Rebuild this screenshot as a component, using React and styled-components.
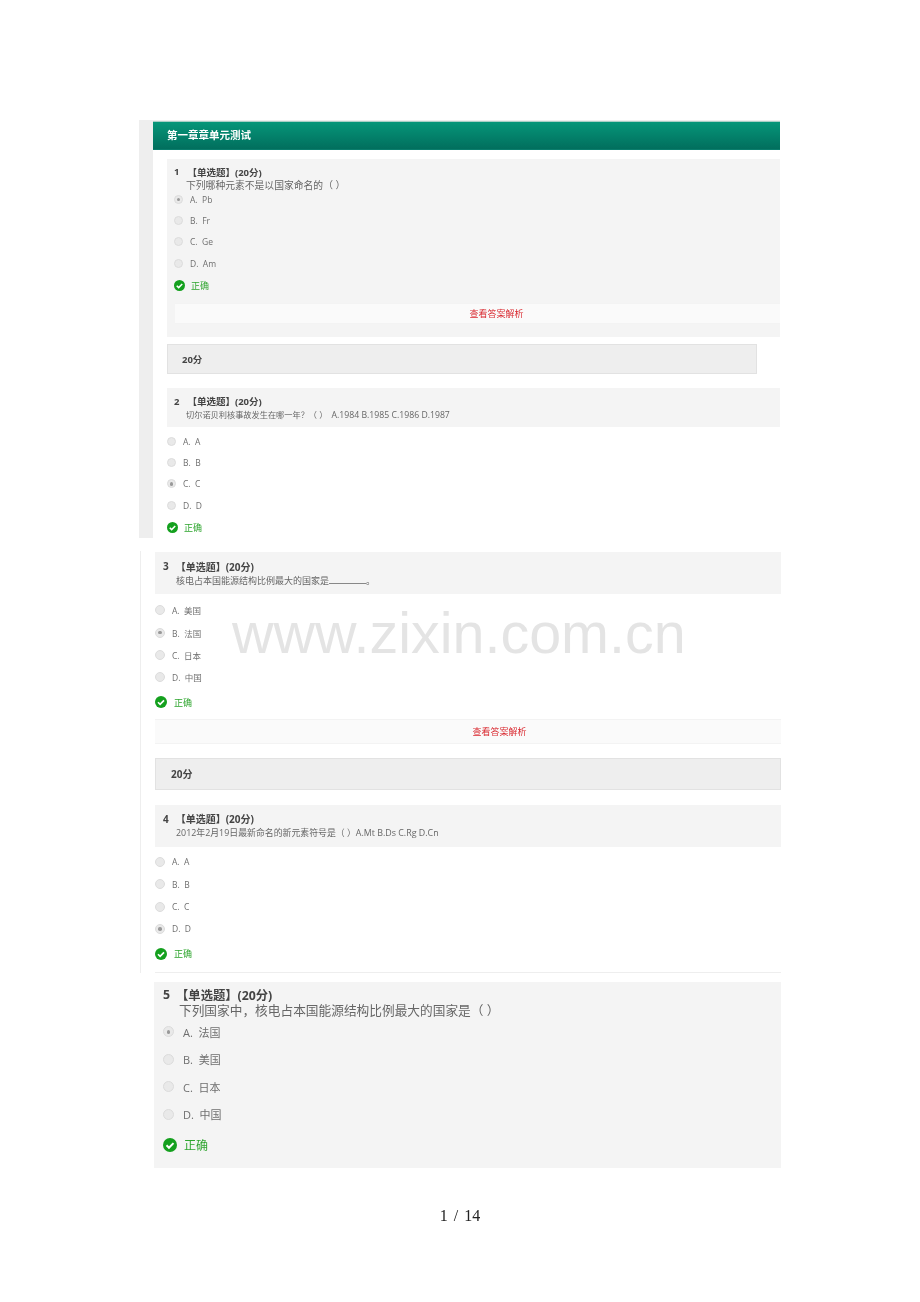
import React from "react";
import styled, { createGlobalStyle } from "styled-components";

const GlobalStyle = createGlobalStyle`
  html, body {
    margin: 0;
    padding: 0;
    background: #fff;
  }
`;

const FONT = `"Open Sans", "Noto Sans CJK SC", sans-serif`;

const Page = styled.div`
  position: relative;
  width: 920px;
  height: 1302px;
  padding-top: 120px;
  box-sizing: border-box;
  overflow: hidden;
  font-family: ${FONT};
  color: #555;
`;

const Sheet = styled.div`
  filter: blur(0.3px);
`;

const ChapterShot = styled.section`
  display: flex;
  width: 641px;
  height: 418px;
  margin-left: 139px;
  border-top: 1px solid #eee;
  box-sizing: border-box;
`;

const Gutter = styled.div`
  flex: none;
  width: 14px;
  background: #eee;
`;

const ChapterBody = styled.div`
  flex: 1;
  min-width: 0;
`;

const ChapterHeader = styled.header`
  display: flex;
  align-items: center;
  height: 29px;
  padding: 0 0 2px 14px;
  box-sizing: border-box;
  border-top: 1px solid #a9cfc6;
  border-bottom: 1px solid #0a7d6c;
  background: linear-gradient(#069679, #016e5d);
  color: #fff;
  font-size: 10.5px;
  font-weight: 700;
`;

const FirstPanel = styled.div`
  height: 178px;
  margin: 9px 0 0 14px;
  padding: 5px 0 0 7px;
  box-sizing: border-box;
  background: #f4f4f4;
`;

const ScoreBar = styled.div`
  display: flex;
  align-items: center;
  height: ${(p) => p.$h}px;
  margin: ${(p) => p.$margin};
  padding-left: ${(p) => p.$pad}px;
  box-sizing: border-box;
  background: #eee;
  border: 1px solid #e2e2e2;
  color: #444;
  font-size: ${(p) => p.$size}px;
  font-weight: 700;
`;

const QuestionHead = styled.div`
  display: flex;
  flex-direction: column;
  justify-content: center;
  height: ${(p) => p.$h}px;
  margin: ${(p) => p.$margin};
  padding-left: ${(p) => p.$pad}px;
  box-sizing: border-box;
  background: #f4f4f4;
`;

const Title = styled.div`
  display: flex;
  gap: ${(p) => p.$gap}px;
  height: ${(p) => p.$line}px;
  align-items: center;
  font-size: ${(p) => p.$size}px;
  font-weight: 700;
  color: #444;
  white-space: nowrap;
`;

const Stem = styled.div`
  height: ${(p) => p.$line}px;
  line-height: ${(p) => p.$line}px;
  padding-left: ${(p) => p.$indent}px;
  font-size: ${(p) => p.$size}px;
  color: #666;
  white-space: pre;
`;

const LatinPart = styled.span`
  font-size: 1.06em;
`;

const Blank = styled.span`
  display: inline-block;
  width: 37px;
  height: 6px;
  border-bottom: 1px solid #888;
`;

const OptionList = styled.div`
  margin: ${(p) => p.$margin};
`;

const OptionRow = styled.div`
  display: flex;
  align-items: center;
  height: ${(p) => p.$h}px;
  gap: ${(p) => p.$gap}px;
  font-size: ${(p) => p.$size}px;
  color: #6f6f6f;
  white-space: pre;
`;

const Radio = styled.span`
  position: relative;
  flex: none;
  width: ${(p) => p.$d}px;
  height: ${(p) => p.$d}px;
  border-radius: 50%;
  background: #e9e9e9;
  border: 1px solid #dcdcdc;
  box-sizing: border-box;
  &::after {
    content: "";
    display: ${(p) => (p.$checked ? "block" : "none")};
    position: absolute;
    inset: 28%;
    border-radius: 50%;
    background: #999;
  }
`;

const Verdict = styled.div`
  display: flex;
  align-items: center;
  height: ${(p) => p.$h}px;
  gap: ${(p) => p.$gap}px;
  font-size: ${(p) => p.$size}px;
  color: #2ea52e;
`;

const VerdictIndent = styled.div`
  margin-left: 14px;
`;

const AnswerBar = styled.div`
  display: flex;
  align-items: center;
  justify-content: center;
  height: ${(p) => p.$h}px;
  margin: ${(p) => p.$margin};
  background: #fafafa;
  color: #d9272e;
  font-size: 9px;
  border-top: 1px solid #f3f3f3;
  border-bottom: 1px solid #f3f3f3;
  box-sizing: border-box;
`;

const AnswerText = styled.span`
  margin-left: ${(p) => p.$shift}px;
`;

const SecondShot = styled.section`
  width: 641px;
  height: 422px;
  margin: 13px 0 0 140px;
  padding: 1px 0 0 14px;
  box-sizing: border-box;
  border-left: 1px solid #eee;
`;

const BottomRule = styled.div`
  height: 1px;
  margin-top: 5px;
  background: #eee;
`;

const LastPanel = styled.section`
  width: 627px;
  height: 186px;
  margin: 9px 0 0 154px;
  padding: 5px 0 0 9px;
  box-sizing: border-box;
  background: #f4f4f4;
`;

const PageNumber = styled.footer`
  margin-top: 38px;
  text-align: center;
  font-family: "Liberation Serif", serif;
  font-size: 16px;
  line-height: 19px;
  word-spacing: 2px;
  color: #222;
`;

const Watermark = styled.div`
  position: absolute;
  left: 232px;
  top: 598px;
  font-family: "Liberation Sans", sans-serif;
  font-size: 57.5px;
  line-height: 70px;
  color: #c4c4c4;
  opacity: 0.45;
  white-space: nowrap;
  pointer-events: none;
`;

const CheckIcon = ({ size }) => (
  <svg width={size} height={size} viewBox="0 0 24 24" style={{ flex: "none" }}>
    <circle cx="12" cy="12" r="12" fill="#14a01e" />
    <path d="M6 12.5l4.2 4.2L18 8.8" fill="none" stroke="#fff" strokeWidth="3.4" />
  </svg>
);

const Options = ({ items, checked, h, gap, size, d, margin }) => (
  <OptionList $margin={margin}>
    {items.map((text, i) => (
      <OptionRow key={text} $h={h} $gap={gap} $size={size}>
        <Radio $d={d} $checked={i === checked} />
        {text}
      </OptionRow>
    ))}
  </OptionList>
);

const Head = ({ num, title, gap, size, line }) => (
  <Title $gap={gap} $size={size} $line={line}>
    <span>{num}</span>
    <span>{title}</span>
  </Title>
);

const TITLE = "【单选题】(20分)";

export default function App() {
  return (
    <Page>
      <GlobalStyle />
      <Sheet>
        <ChapterShot>
          <Gutter />
          <ChapterBody>
            <ChapterHeader>第一章章单元测试</ChapterHeader>
            <FirstPanel>
              <Head num="1" title={TITLE} gap={8} size={9.5} line={15} />
              <Stem $size={9.8} $line={13} $indent={12}>下列哪种元素不是以国家命名的（ ）</Stem>
              <Options
                items={["A.  Pb", "B.  Fr", "C.  Ge", "D.  Am"]}
                checked={0}
                h={21.2}
                gap={7}
                size={8.5}
                d={9}
                margin="-3px 0 0 0"
              />
              <Verdict $h={24} $gap={6} $size={9}>
                <CheckIcon size={11} />
                正确
              </Verdict>
              <AnswerBar $h={21} $margin="5px 0 0 1px">
                <AnswerText $shift={38}>查看答案解析</AnswerText>
              </AnswerBar>
            </FirstPanel>
            <ScoreBar $h={30} $pad={14} $size={9.5} $margin="7px 23px 0 14px">20分</ScoreBar>
            <QuestionHead $h={39} $pad={7} $margin="14px 0 0 14px">
              <Head num="2" title={TITLE} gap={8} size={9.5} line={14} />
              <Stem $size={8.2} $line={13} $indent={12}>切尔诺贝利核事故发生在哪一年？（ ）  <LatinPart>A.1984 B.1985 C.1986 D.1987</LatinPart></Stem>
            </QuestionHead>
            <Options
              items={["A.  A", "B.  B", "C.  C", "D.  D"]}
              checked={2}
              h={21.2}
              gap={7}
              size={8.5}
              d={9}
              margin="4px 0 0 14px"
            />
            <VerdictIndent>
              <Verdict $h={24} $gap={6} $size={9}>
                <CheckIcon size={11} />
                正确
              </Verdict>
            </VerdictIndent>
          </ChapterBody>
        </ChapterShot>

        <SecondShot>
          <QuestionHead $h={42} $pad={8} $margin="0">
            <Head num="3" title={TITLE} gap={7} size={10} line={15} />
            <Stem $size={9} $line={14} $indent={13}>核电占本国能源结构比例最大的国家是<Blank />。</Stem>
          </QuestionHead>
          <Options
            items={["A.  美国", "B.  法国", "C.  日本", "D.  中国"]}
            checked={1}
            h={22.4}
            gap={7}
            size={8.5}
            d={10}
            margin="5px 0 0 0"
          />
          <Verdict $h={27} $gap={7} $size={9}>
            <CheckIcon size={12} />
            正确
          </Verdict>
          <AnswerBar $h={25} $margin="3px 0 0 0">
            <AnswerText $shift={63}>查看答案解析</AnswerText>
          </AnswerBar>
          <ScoreBar $h={32} $pad={15} $size={10} $margin="14px 0 0 0">20分</ScoreBar>
          <QuestionHead $h={42} $pad={8} $margin="15px 0 0 0">
            <Head num="4" title={TITLE} gap={7} size={10} line={15} />
            <Stem $size={8.9} $line={14} $indent={13}>2012年2月19日最新命名的新元素符号是（ ）A.Mt B.Ds C.Rg D.Cn</Stem>
          </QuestionHead>
          <Options
            items={["A.  A", "B.  B", "C.  C", "D.  D"]}
            checked={3}
            h={22.4}
            gap={7}
            size={8.5}
            d={10}
            margin="4px 0 0 0"
          />
          <Verdict $h={27} $gap={7} $size={9}>
            <CheckIcon size={12} />
            正确
          </Verdict>
          <BottomRule />
        </SecondShot>

        <LastPanel>
          <Head num="5" title={TITLE} gap={6} size={12.3} line={15} />
          <Stem $size={12.7} $line={17} $indent={16}>下列国家中，核电占本国能源结构比例最大的国家是（ ）</Stem>
          <Options
            items={["A.  法国", "B.  美国", "C.  日本", "D.  中国"]}
            checked={0}
            h={27.5}
            gap={9}
            size={11}
            d={11}
            margin="-1px 0 0 0"
          />
          <Verdict $h={33} $gap={7} $size={12}>
            <CheckIcon size={14} />
            正确
          </Verdict>
        </LastPanel>

        <PageNumber>1 / 14</PageNumber>
      </Sheet>
      <Watermark>www.zixin.com.cn</Watermark>
    </Page>
  );
}
